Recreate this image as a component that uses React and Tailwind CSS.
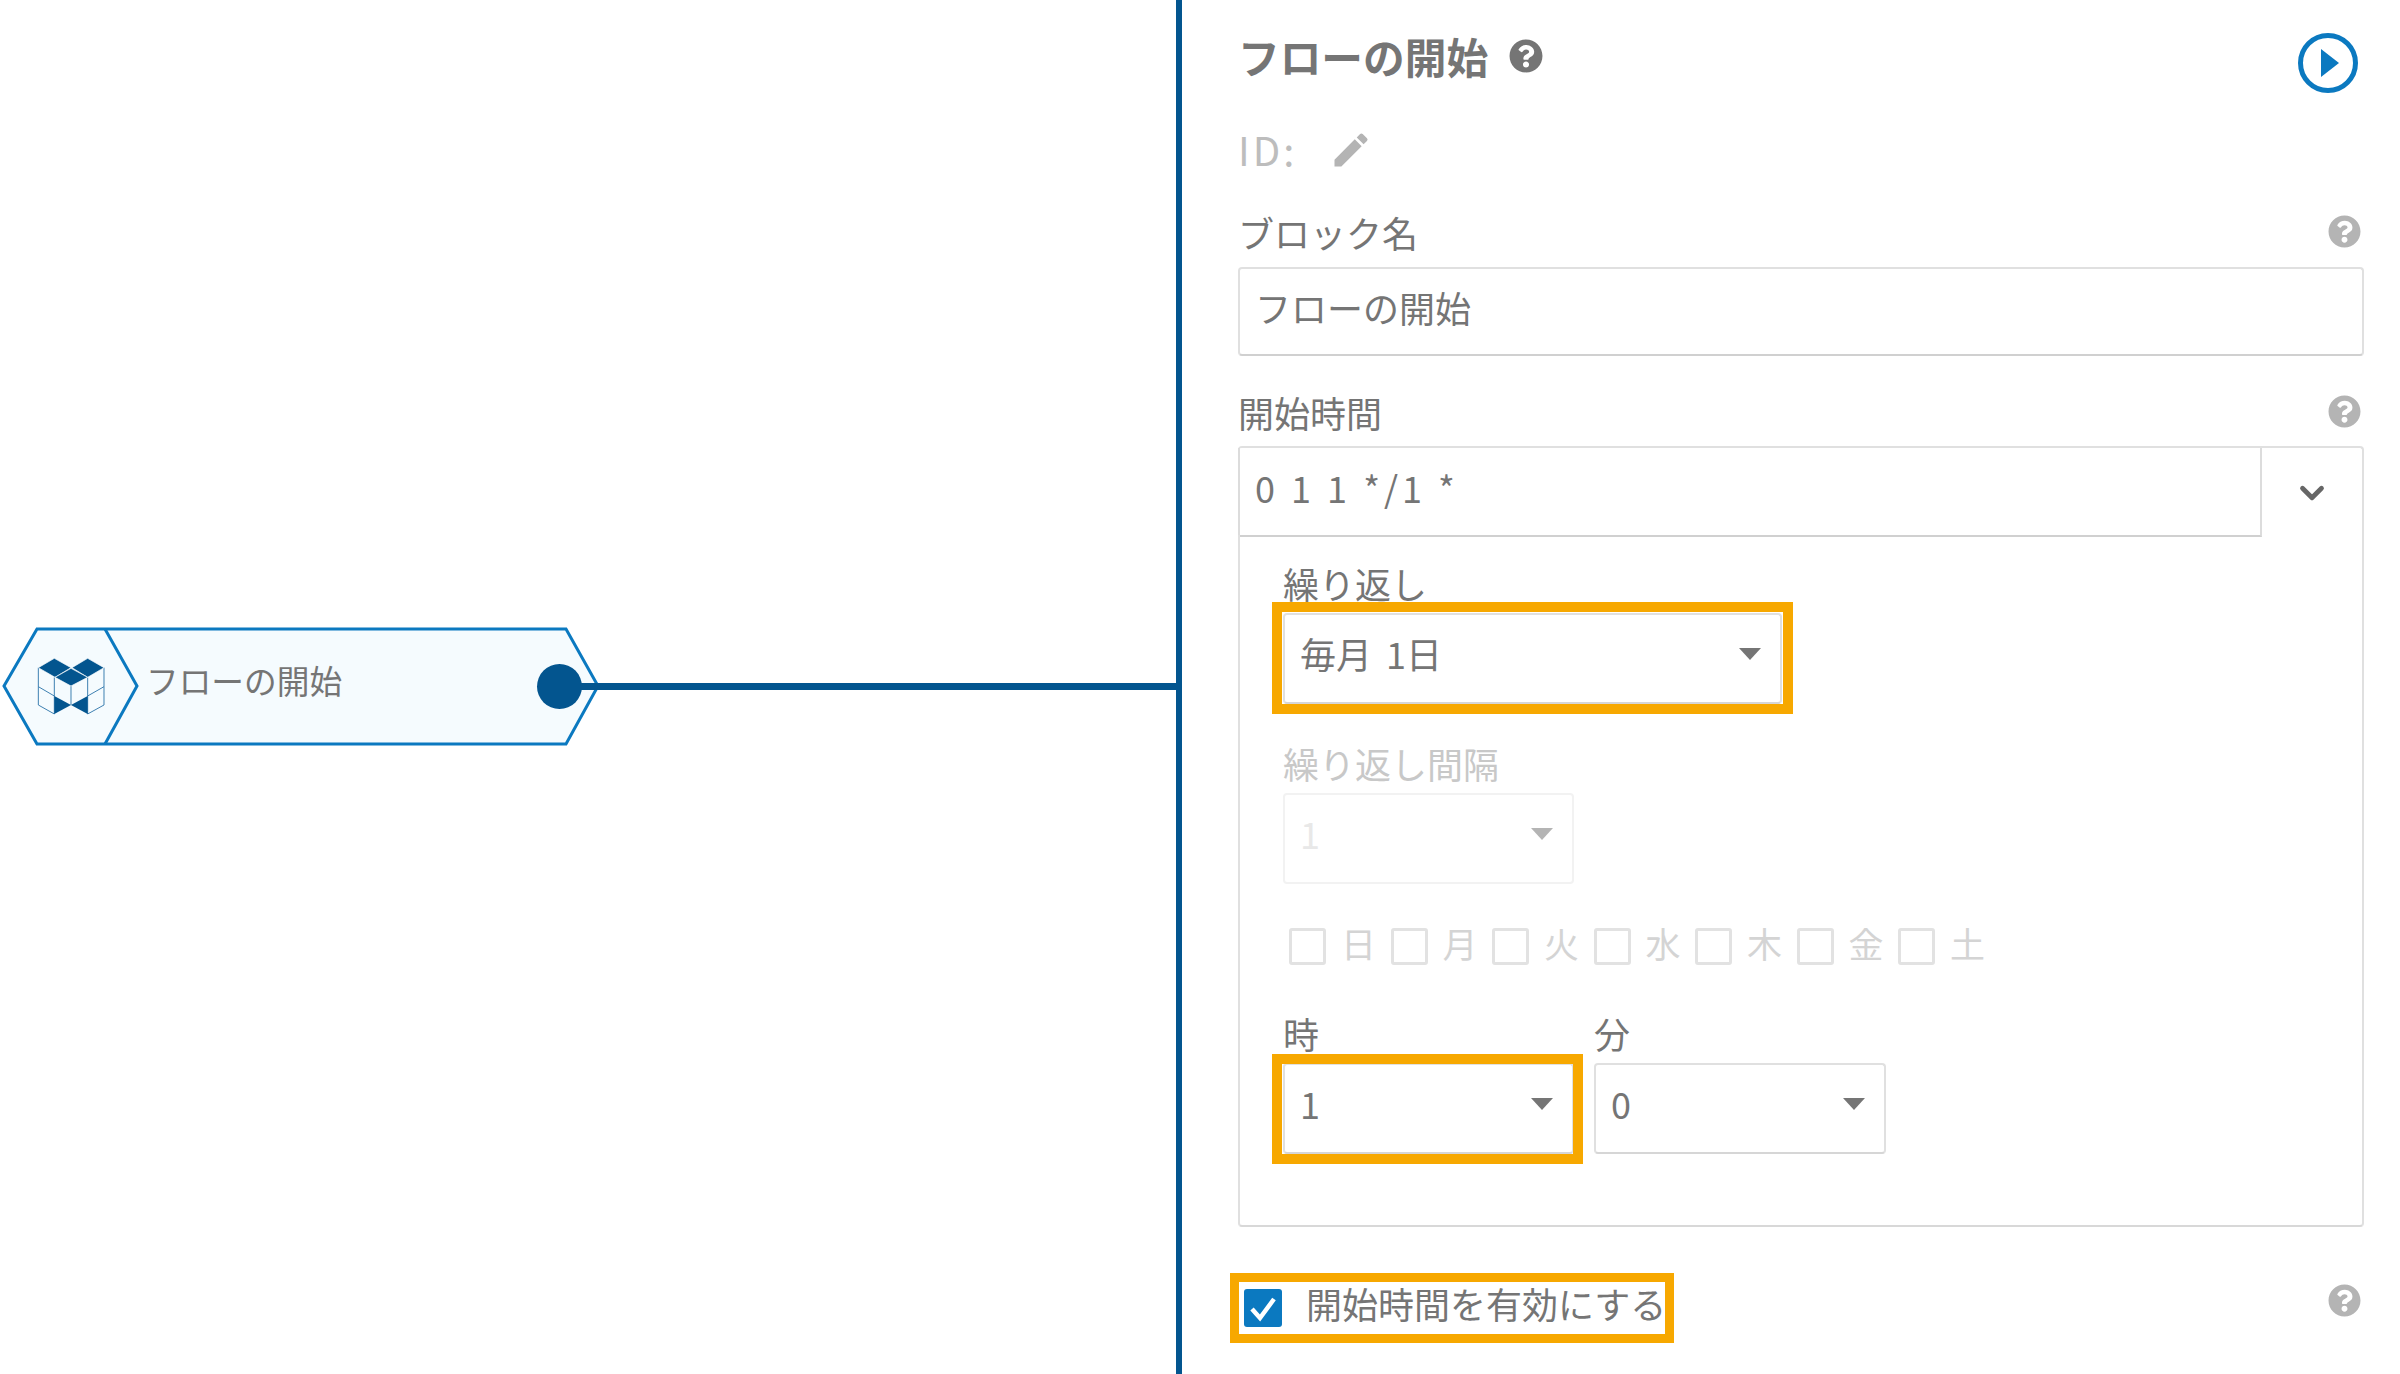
import { ChevronDown } from "lucide-react";
import { FaQuestionCircle } from "react-icons/fa";
import { MdEdit } from "react-icons/md";

const jp = "font-['Noto_Sans_CJK_JP','Noto_Sans',sans-serif]";
const days = ["日", "月", "火", "水", "木", "金", "土"];

function Select({ value, width, disabled, highlight }) {
  return (
    <div
      className={`relative flex h-[91px] items-center rounded-[4px] border-2 pb-[12px] pl-[15px] text-[36px] [word-spacing:6px] ${width} ${
        disabled
          ? "border-[#f2f2f2] text-[#e8e8e8]"
          : "border-[#e0e0e0] border-b-[#d6d6d6] text-[#757575]"
      }`}
    >
      {value}
      <svg
        viewBox="0 0 22 12"
        className="absolute top-[33px] right-[19px] h-[12px] w-[22px]"
      >
        <polygon points="0,0 22,0 11,12" fill={disabled ? "#b4b4b4" : "#757575"} />
      </svg>
      {highlight && (
        <div className={`pointer-events-none absolute border-[10px] border-[#f7a800] ${highlight}`} />
      )}
    </div>
  );
}

function FieldLabel({ children, help, className = "" }) {
  return (
    <div className={`flex items-center justify-between text-[36px] leading-none text-[#757575] ${className}`}>
      <span className="pb-[4px]">{children}</span>
      {help && <FaQuestionCircle className="mr-[3px] mb-[6px] text-[33px] text-[#b4b4b4]" />}
    </div>
  );
}

function FlowNode() {
  return (
    <div className="absolute top-[620px] left-0 h-[130px] w-[600px]">
      <svg viewBox="0 0 600 130" className="absolute inset-0 h-[130px] w-[600px]">
        <polygon
          points="37,9 566,9 598,66 566,124 37,124 4,66"
          fill="#f5fbfe"
          stroke="#0b79c0"
          strokeWidth="3"
        />
        <polyline points="105,9 137,66 105,124" fill="none" stroke="#0b79c0" strokeWidth="3" />
        <g transform="scale(0.3333)">
          <g fill="none" stroke="#3d7fb1" strokeWidth="3">
            <path d="M115 143V255L163 282V172M115 200L163 228" />
            <path d="M312 143V255L263 282V172M312 200L263 228" />
            <path d="M213 198V255" />
          </g>
          <g fill="#03558f" stroke="#fff" strokeWidth="2">
            <polygon points="163,115 213,143 165,172 115,143" />
            <polygon points="263,115 312,143 263,172 216,143" />
            <polygon points="213,145 263,172 213,198 165,172" />
          </g>
          <polygon points="163,228 213,255 163,282" fill="#03558f" />
          <polygon points="263,228 213,255 263,282" fill="#03558f" />
        </g>
      </svg>
      <span className="absolute top-[41px] left-[146px] text-[32.7px] leading-[38px] text-[#757575]">
        フローの開始
      </span>
      <div className="absolute top-[44px] left-[537px] h-[45px] w-[45px] rounded-full bg-[#03558f]" />
      <div className="absolute top-[63px] left-[580px] h-[7px] w-[596px] bg-[#03558f]" />
    </div>
  );
}

export default function App() {
  return (
    <div className={`flex h-[1374px] w-[2400px] overflow-hidden bg-white ${jp}`}>
      <div className="relative w-[1176px] shrink-0">
        <FlowNode />
      </div>
      <div className="w-[6px] shrink-0 bg-[#03558f]" />
      <div className="flex min-w-0 flex-1 flex-col pr-[36px] pl-[56px]">
        <div className="flex h-[116px] justify-between">
          <div className="flex h-[116px] items-center gap-[21px]">
            <h1 className="pb-[2px] text-[41.7px] leading-none font-bold text-[#757575]">フローの開始</h1>
            <FaQuestionCircle className="mb-[4px] text-[34px] text-[#757575]" />
          </div>
          <svg viewBox="0 0 60 60" className="mt-[33px] mr-[6px] h-[60px] w-[60px]">
            <circle cx="30" cy="30" r="27.5" fill="none" stroke="#0b79c0" strokeWidth="5" />
            <polygon points="23,16 41,30 23,44" fill="#0b79c0" />
          </svg>
        </div>

        <div className="flex h-[68px] items-center gap-[32px] text-[40px] leading-none text-[#bdbdbd]">
          <span className="pb-[3px] tracking-[3px]">ID:</span>
          <MdEdit className="text-[44px] text-[#b4b4b4]" />
        </div>

        <FieldLabel help className="mt-[26px] mb-[9px] h-[48px]">ブロック名</FieldLabel>
        <input
          readOnly
          value="フローの開始"
          className="box-border h-[89px] w-full rounded-[4px] border-2 border-[#e0e0e0] border-b-[#d0d0d0] px-[15px] pb-[10px] text-[36px] text-[#757575] outline-none"
        />

        <FieldLabel help className="mt-[34px] mb-[8px] h-[48px]">開始時間</FieldLabel>
        <div className="flex h-[89px] rounded-t-[4px] border-t-2 border-r-2 border-[#e0e0e0]">
          <input
            readOnly
            value="0 1 1 */1 *"
            className="box-border h-[89px] w-[1024px] border-2 border-t-0 border-[#dcdcdc] border-b-[#d0d0d0] px-[15px] pb-[10px] text-[36px] tracking-[4px] text-[#757575] outline-none"
          />
          <div className="flex flex-1 items-center justify-center pt-[2px]">
            <ChevronDown className="h-[38px] w-[38px] text-[#666666]" strokeWidth={3} />
          </div>
        </div>

        <div className="box-border h-[692px] rounded-b-[4px] border-2 border-t-0 border-[#e0e0e0] border-b-[#d8d8d8] pt-[30px] pl-[43px]">
          <FieldLabel className="mb-[8px] h-[40px]">繰り返し</FieldLabel>
          <Select
            value="毎月 1日"
            width="w-[499px]"
            highlight="-top-[13px] -right-[13px] -bottom-[12px] -left-[13px]"
          />

          <div className="mt-[41px] mb-[8px] flex h-[40px] items-center pb-[4px] text-[36px] leading-none text-[#c8c8c8]">
            繰り返し間隔
          </div>
          <Select value="1" width="w-[291px]" disabled />

          <div className="mt-[44px] ml-[6px] flex h-[37px] items-center">
            {days.map((day) => (
              <div key={day} className="flex w-[101.5px] shrink-0 items-center gap-[15px]">
                <span className="box-border h-[37px] w-[37px] rounded-[3px] border-[3px] border-[#e2e2e2]" />
                <span className="pb-[8px] text-[35px] leading-none text-[#d4d4d4]">{day}</span>
              </div>
            ))}
          </div>

          <div className="mt-[50px] flex gap-[20px]">
            <div>
              <FieldLabel className="mb-[8px] h-[40px]">時</FieldLabel>
              <Select
                value="1"
                width="w-[291px]"
                highlight="-top-[11px] -right-[11px] -bottom-[12px] -left-[13px]"
              />
            </div>
            <div>
              <FieldLabel className="mb-[8px] h-[40px]">分</FieldLabel>
              <Select value="0" width="w-[292px]" />
            </div>
          </div>
        </div>

        <div className="mt-[62px] flex h-[38px] items-center justify-between">
          <div className="relative ml-[6px] flex items-center gap-[24px]">
            <span className="flex h-[38px] w-[38px] items-center justify-center rounded-[3px] bg-[#0b79c0]">
              <svg viewBox="0 0 38 38" className="h-[38px] w-[38px]">
                <path d="M8 20L16 29L30 10" fill="none" stroke="#fff" strokeWidth="4.5" />
              </svg>
            </span>
            <span className="pb-[10px] text-[36px] leading-none whitespace-nowrap text-[#757575]">
              開始時間を有効にする
            </span>
            <div className="pointer-events-none absolute -top-[12px] -right-[8px] -bottom-[12px] -left-[14px] border-[9px] border-[#f7a800]" />
          </div>
          <FaQuestionCircle className="mr-[3px] mb-[16px] text-[33px] text-[#b4b4b4]" />
        </div>
      </div>
    </div>
  );
}
